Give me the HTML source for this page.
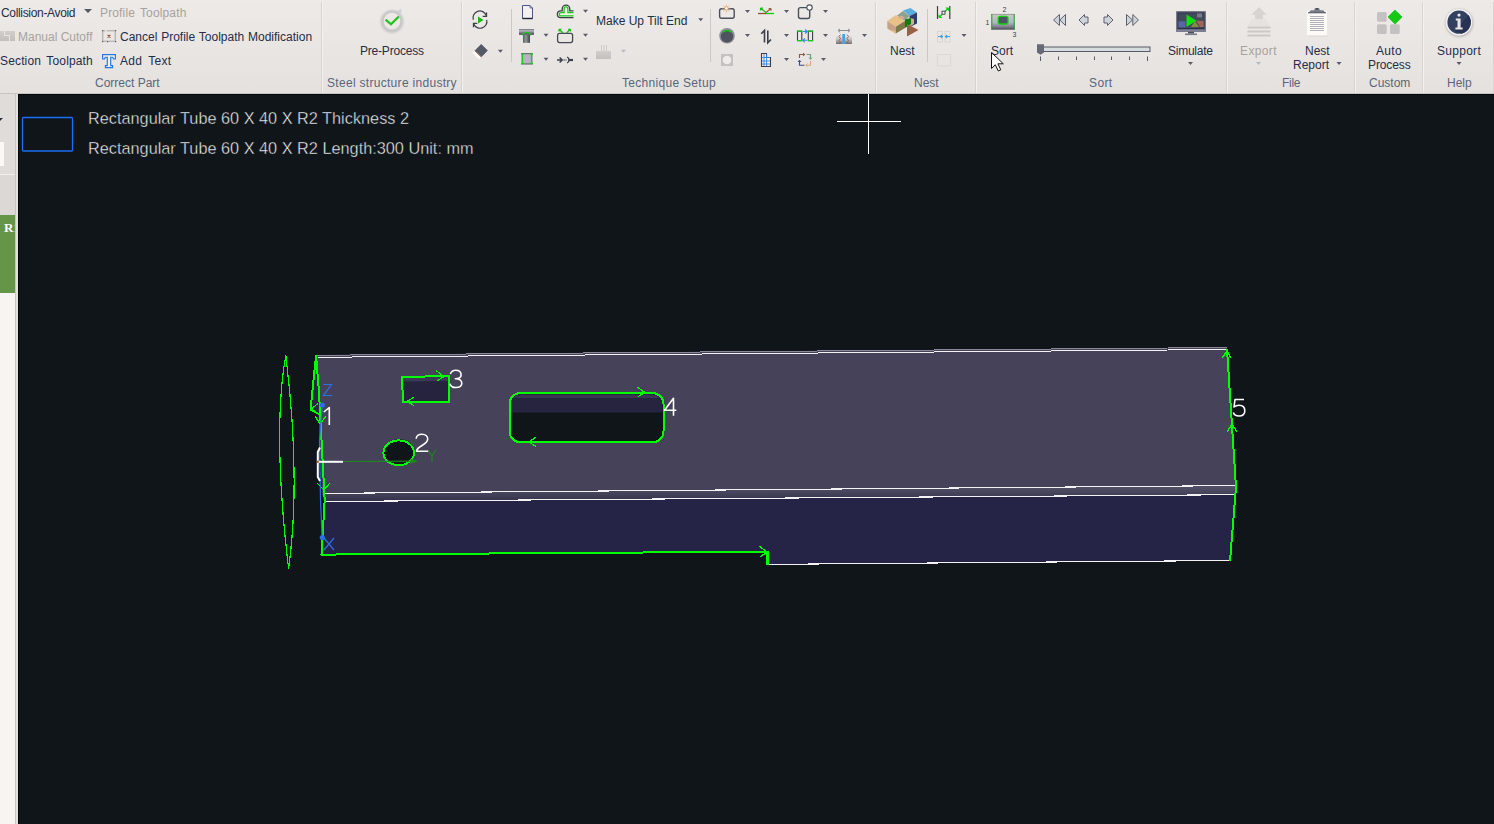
<!DOCTYPE html>
<html><head><meta charset="utf-8">
<style>
*{margin:0;padding:0;box-sizing:border-box}
html,body{width:1494px;height:824px;overflow:hidden;background:#10151a;font-family:"Liberation Sans",sans-serif}
#rib{position:absolute;left:0;top:0;width:1494px;height:94px;background:linear-gradient(#eeeae7,#e5e1de);border-bottom:1px solid #c9c4c2}
.t{position:absolute;white-space:nowrap;font-size:12px;line-height:14px;color:#252d48}
.d{color:#a8a29c}
.g{color:#58667c}
.sep{position:absolute;top:2px;width:1px;height:91px;background:#d9d4d1;box-shadow:1px 0 0 #f4f1ef}
.isep{position:absolute;top:9px;width:1px;height:53px;background:#cdc8c5}
.dd{position:absolute;width:0;height:0;border-left:4px solid transparent;border-right:4px solid transparent;border-top:4px solid #555b66}
.ico{position:absolute}
#left{position:absolute;left:0;top:94px;width:18px;height:730px;background:#f8f4f1;border-right:2px solid #e4e0dd;box-shadow:inset -1px 0 0 #c9c4c1}
#cv{position:absolute;left:18px;top:94px;width:1476px;height:730px;background:#10151a;border-top:1px solid #03070a;border-left:1px solid #03070a}
.ct{position:absolute;white-space:nowrap;font-size:16.3px;line-height:18px;color:#f4f4f4;-webkit-text-stroke:0.4px #10151a}
</style></head><body>
<div id="rib">
<svg id="ribsvg" width="1494" height="94" viewBox="0 0 1494 94" style="position:absolute;left:0;top:0">
<defs>
<linearGradient id="gGray" x1="0" y1="0" x2="0" y2="1"><stop offset="0" stop-color="#d2cecb"/><stop offset="1" stop-color="#c3bfbc"/></linearGradient>
<linearGradient id="gPipe" x1="0" y1="0" x2="0" y2="1"><stop offset="0" stop-color="#6b6d78"/><stop offset="0.3" stop-color="#b7b8c0"/><stop offset="0.7" stop-color="#6e707b"/><stop offset="1" stop-color="#3e404c"/></linearGradient>
<linearGradient id="gStem" x1="0" y1="0" x2="1" y2="0"><stop offset="0" stop-color="#5a5c66"/><stop offset="0.4" stop-color="#8f9a90"/><stop offset="1" stop-color="#3f414d"/></linearGradient>
<linearGradient id="gSort" x1="0" y1="0" x2="0" y2="1"><stop offset="0" stop-color="#8e8c90"/><stop offset="0.1" stop-color="#c9c5c5"/><stop offset="0.55" stop-color="#b1b3c3"/><stop offset="0.8" stop-color="#80828f"/><stop offset="1" stop-color="#4b4c5a"/></linearGradient>
<linearGradient id="gBlock" x1="0" y1="0" x2="0" y2="1"><stop offset="0" stop-color="#f4f2f0"/><stop offset="0.5" stop-color="#c6c6c8"/><stop offset="1" stop-color="#6f717a"/></linearGradient>
<radialGradient id="gShadow" cx="0.5" cy="0.5" r="0.5"><stop offset="0.7" stop-color="#c8c6c6"/><stop offset="1" stop-color="#e9e5e2" stop-opacity="0"/></radialGradient>
</defs>
<!-- dropdown arrows -->
<g fill="#575c68">
<polygon points="85.5,9.5 90.5,9.5 88,12.5"/>
<polygon points="497.9,49.8 502.9,49.8 500.4,52.8"/>
<polygon points="543.5,33.8 548.5,33.8 546,36.8"/>
<polygon points="543.5,57.8 548.5,57.8 546,60.8"/>
<polygon points="583,9.8 588,9.8 585.5,12.8"/>
<polygon points="583,33.8 588,33.8 585.5,36.8"/>
<polygon points="583,57.8 588,57.8 585.5,60.8"/>
<polygon points="698.2,18.2 703.2,18.2 700.7,21.2"/>
<polygon points="745,10 750,10 747.5,13"/>
<polygon points="784,10 789,10 786.5,13"/>
<polygon points="823,10 828,10 825.5,13"/>
<polygon points="745,34 750,34 747.5,37"/>
<polygon points="784,34 789,34 786.5,37"/>
<polygon points="823,34 828,34 825.5,37"/>
<polygon points="862,34 867,34 864.5,37"/>
<polygon points="784,58 789,58 786.5,61"/>
<polygon points="821,58 826,58 823.5,61"/>
<polygon points="961.5,34 966.5,34 964,37"/>
<polygon points="1188,62 1193,62 1190.5,65"/>
<polygon points="1336.5,62 1341.5,62 1339,65"/>
<polygon points="1456.5,62 1461.5,62 1459,65"/>
</g>
<g fill="#b3b8c6">
<polygon points="621,49.8 626,49.8 623.5,52.8"/>
<polygon points="1256,62 1261,62 1258.5,65"/>
</g>
<!-- Manual cutoff disabled icon -->
<g>
<path d="M0,31 H4 V36 H9 V41 H0 Z" fill="url(#gGray)"/>
<path d="M5,31 H15 V41 H10 V35 H5 Z" fill="url(#gGray)"/>
</g>
<!-- cancel icon -->
<rect x="102.7" y="30.7" width="12.6" height="10.6" fill="none" stroke="#bcb8b5" stroke-width="1.5"/>
<rect x="105" y="29.8" width="2" height="1.8" fill="#e6e2df"/>
<g fill="#5a5c66"><rect x="102" y="30" width="1.2" height="1.2"/><rect x="115" y="30" width="1.2" height="1.2"/><rect x="102" y="41" width="1.2" height="1.2"/><rect x="115" y="41" width="1.2" height="1.2"/><rect x="107" y="41" width="1.2" height="1.2"/></g>
<path d="M107.6,34.8 L110.4,37.6 M110.4,34.8 L107.6,37.6" stroke="#8a4526" stroke-width="1.1"/>
<!-- T icon -->
<path d="M102.6,54.6 H115.4 V59 H113.6 L112.7,57.2 H110.7 V65.6 H112.6 V67.6 H105.4 V65.6 H107.3 V57.2 H105.3 L104.4,59 H102.6 Z" fill="#fbefe3" stroke="#1f78e6" stroke-width="1.15"/>
<!-- Pre-Process -->
<filter id="blur1" x="-50%" y="-50%" width="200%" height="200%"><feGaussianBlur stdDeviation="1.1"/></filter>
<circle cx="392" cy="21.5" r="9.6" fill="none" stroke="#c2c0c2" stroke-width="3.2" filter="url(#blur1)"/>
<circle cx="392" cy="21" r="8.2" fill="#ece8e5"/>
<path d="M396.5,11.5 L401.5,8.5 L401,14 Z" fill="#cfd1d8"/>
<path d="M385.6,19.6 L391,24.3 L398.8,16.5" fill="none" stroke="#22c222" stroke-width="2.3"/>
<!-- refresh/play -->
<path d="M486.2,15.5 A6.8,6.8 0 0 0 473.3,19.8 M473.8,24 A6.8,6.8 0 0 0 486.7,19.8" fill="none" stroke="#3d414c" stroke-width="1.2"/>
<path d="M486.5,12.5 V16.3 H482.7 M473.5,27.2 V23.4 H477.3" fill="none" stroke="#3d414c" stroke-width="1.3"/>
<polygon points="478,16.5 483.5,20 478,23.5" fill="#18b818"/>
<!-- eraser -->
<polygon points="481.2,44 487.8,50.4 481.5,57 474.8,50.4" fill="#535966"/>
<polygon points="474.8,50.4 481.5,57 479,59.5 472.5,53" fill="#fbf8f6"/>
<line x1="474.8" y1="50.6" x2="481.3" y2="57" stroke="#8a5a40" stroke-width="1"/>
<!-- separators inner drawn in html -->
<!-- page icon -->
<path d="M522.5,5.5 H530 L532.5,8 V18.5 H522.5 Z" fill="#f3f0ee" stroke="#4a5590" stroke-width="1"/>
<path d="M530,5.5 V8 H532.5" fill="none" stroke="#4a5590" stroke-width="0.8"/>
<line x1="522.5" y1="18.5" x2="532.5" y2="18.5" stroke="#1d2240" stroke-width="1.4"/>
<!-- T pipe -->
<rect x="519" y="29" width="15" height="5.8" fill="url(#gPipe)"/>
<rect x="523" y="34.8" width="7" height="8" fill="url(#gStem)"/>
<path d="M522.5,35.5 A4,3.2 0 0 1 530.5,35.5" fill="none" stroke="#1cc81c" stroke-width="1.2"/>
<!-- square green corners -->
<rect x="521" y="53" width="12" height="11.5" fill="#b4b5c1"/>
<rect x="521" y="53" width="12" height="1.2" fill="#6e707b"/>
<rect x="521" y="63.3" width="12" height="1.2" fill="#6e707b"/>
<path d="M522.5,54 V64 M531.5,54 V64" stroke="#15d015" stroke-width="1.3"/>
<path d="M521,54 H523.5 M521,63.5 H523.5 M530.5,54 H533 M530.5,63.5 H533" stroke="#15d015" stroke-width="1.2"/>
<!-- cloud icon -->
<path d="M573.5,10.8 H569.8 V9.2 A3.3,3.6 0 0 0 562.2,9.2 V10.8 H560.8 A3.45,3.45 0 0 0 560.8,17.7 H573.5" fill="#f7eeee" stroke="#3b3f4a" stroke-width="1.3"/>
<path d="M573.5,12.6 H567.9 V8.9 A1.65,1.8 0 0 0 564.1,8.9 V12.6 H560.9 A1.6,1.6 0 0 0 560.9,15.8 H573.5" fill="none" stroke="#10d010" stroke-width="1.3"/>
<!-- rect arrows -->
<rect x="557.6" y="33.4" width="15" height="9.2" rx="2" fill="none" stroke="#454955" stroke-width="1.3"/>
<path d="M563,33 L559,29.3 M559,29.3 V31.6 M559,29.3 H561.3 M566.5,33 L570.5,29.3 M570.5,29.3 V31.6 M570.5,29.3 H568.2" stroke="#10c010" stroke-width="1.3" fill="none"/>
<!-- arrow dots -->
<path d="M557,60 H562 M559.6,57.4 L562.3,60 L559.6,62.6 M563.6,60 H564.6 M565.6,60 H566.4" stroke="#3b3f4a" stroke-width="1.4" fill="none"/><path d="M567,57 A3.2,3.2 0 0 1 567,63" stroke="#3b3f4a" stroke-width="1.3" fill="none"/><path d="M568.5,60 H573" stroke="#3b3f4a" stroke-width="2.2"/>
<!-- disabled comb -->
<rect x="596" y="51" width="15" height="8" fill="url(#gGray)"/>
<path d="M601.5,45 V51 M604,45 V51 M606.5,45 V51" stroke="#cfcbc8" stroke-width="1"/>
<!-- rect + sun -->
<rect x="719.6" y="8.7" width="14.6" height="9.6" rx="2" fill="none" stroke="#4a4f5c" stroke-width="1.4"/>
<circle cx="726.4" cy="8.4" r="1.8" fill="#fff" stroke="#e49a58" stroke-width="1"/>
<path d="M726.4,4.5 V5.5 M726.4,11.3 V12.3 M722.5,8.4 H723.5 M729.3,8.4 H730.3 M723.6,5.6 L724.3,6.3 M728.5,10.5 L729.2,11.2 M729.2,5.6 L728.5,6.3 M723.6,11.2 L724.3,10.5" stroke="#e49a58" stroke-width="0.9"/>
<!-- line icon -->
<path d="M758,13.5 H766" stroke="#8a5030" stroke-width="1.3"/>
<path d="M766,13.5 H774" stroke="#10c810" stroke-width="1.3"/>
<path d="M766,12.5 L760.5,8 M760.5,8 V10.5 M760.5,8 H763" stroke="#10c010" stroke-width="1.2" fill="none"/>
<path d="M766,12.5 L771,8.5 M771,8.5 V10.8 M771,8.5 H768.7" stroke="#9a5a3a" stroke-width="1.2" fill="none"/>
<!-- square with circle -->
<rect x="798.5" y="7.6" width="11.2" height="10.9" rx="2" fill="none" stroke="#4a4f5c" stroke-width="1.4"/>
<circle cx="809.5" cy="7.6" r="2.7" fill="#ffffff" stroke="#4a4f5c" stroke-width="1.1"/>
<!-- dark circle -->
<circle cx="727" cy="35.8" r="7.8" fill="#8d8f97"/>
<circle cx="727" cy="36.3" r="6.2" fill="#4e535f"/>
<path d="M722.5,32.3 A6,5 0 0 1 731.5,32.3" fill="none" stroke="#15c815" stroke-width="1.2"/>
<!-- up down arrows -->
<path d="M764.5,42.5 V30.5 L761.2,33.8" stroke="#3b3f4a" stroke-width="1.6" fill="none"/>
<path d="M767.8,30.5 V42.8 L771,39.5" stroke="#3b3f4a" stroke-width="1.6" fill="none"/>
<!-- green boxes blue arrows -->
<rect x="797.5" y="31.2" width="4.3" height="9.4" fill="none" stroke="#3b3f4a" stroke-width="1.1"/>
<rect x="808.3" y="31.2" width="4.3" height="9.4" fill="none" stroke="#3b3f4a" stroke-width="1.1"/>
<path d="M797,31.2 H802.3 M797,40.6 H802.3 M807.8,31.2 H813.1 M807.8,40.6 H813.1" stroke="#10d010" stroke-width="1.3"/>
<path d="M803,31.5 H807 M805.2,29.5 L807.2,31.5 L805.2,33.5 M807,40.3 H803 M804.8,38.3 L802.8,40.3 L804.8,42.3" stroke="#2a86f0" stroke-width="1.1" fill="none"/>
<!-- pipe thing -->
<path d="M838,30.5 H850 M840,28.8 L838,30.5 L840,32.2 M848,28.8 L850,30.5 L848,32.2" stroke="#8a8c94" stroke-width="1" fill="none"/>
<rect x="836" y="34" width="16" height="10" fill="url(#gBlock)"/>
<rect x="842.3" y="34" width="2.8" height="10" fill="#4aa3e0"/>
<path d="M840.5,34.5 L839,36.5 L840.5,38.5 L839,40.5 L840.5,42.5 L839,44 M847,34.5 L848.5,36.5 L847,38.5 L848.5,40.5 L847,42.5 L848.5,44" stroke="#9a4a30" stroke-width="0.8" fill="none"/>
<!-- gray square circle -->
<rect x="721" y="54" width="12" height="12" fill="#c3c1bf"/>
<circle cx="727" cy="60" r="4.3" fill="#efebe8"/>
<!-- building grid -->
<path d="M761.5,53.5 H766.5 V57.5 H770.5 V66.5 H761.5 Z" fill="#fbefe6" stroke="#3b3f4a" stroke-width="1.1"/>
<path d="M764,54 V66 M766.6,54 V66 M762,57.5 H770 M762,61 H770 M762,64 H770" stroke="#2a86f0" stroke-width="0.9"/>
<!-- loop arrows -->
<path d="M799.5,58 V54.5 H804.5" stroke="#8a5a40" stroke-width="1.1" fill="none"/>
<path d="M803,53 L804.8,54.5 L803,56" stroke="#8a5a40" stroke-width="1" fill="none"/>
<path d="M806.5,54.5 H810.5 V59" stroke="#7a9a88" stroke-width="1.1" fill="none"/>
<path d="M809,57.5 L810.5,59.3 L812,57.5" stroke="#7a9a88" stroke-width="1" fill="none"/>
<path d="M810.5,61 V65.2 H806" stroke="#e0a870" stroke-width="1.1" fill="none"/>
<path d="M807.5,63.6 L805.8,65.2 L807.5,66.8" stroke="#e0a870" stroke-width="1" fill="none"/>
<path d="M804.5,65.2 H799.5 V60.5" stroke="#3a4a90" stroke-width="1.1" fill="none"/>
<path d="M798,62 L799.5,60.2 L801,62" stroke="#3a4a90" stroke-width="1" fill="none"/>
<!-- Nest icon -->
<polygon points="903,10.5 910.5,8 917,12.5 909.5,16" fill="#5aaee0"/>
<polygon points="909.5,16 917,12.5 917,23.5 910,27" fill="#2d3d68"/>
<polygon points="897,15.5 903,11 909.5,16 905,21" fill="#8fa090"/>
<polygon points="910,18 914,19 914,24 908,27.5" fill="#d3ab90"/>
<polygon points="887.3,21 895.8,14.9 905,21 895.8,26.7" fill="#e8c088"/>
<polygon points="887.3,21 895.8,26.7 895.8,33.5 887.3,28.5" fill="#c9a088"/>
<polygon points="891,30 895.8,31 895.8,33.5 889,30" fill="#e8c088"/>
<polygon points="895.8,26.7 905,21 905,28 895.8,33.5" fill="#7d7a48"/>
<polygon points="905,19.5 911,18 911,24 905,28" fill="#127a12"/>
<polygon points="898,17 902,15.5 905,18 901,19.5" fill="#d4ab90"/>
<polygon points="907,24 918.5,30 907,36.5" fill="#9b6048"/>
<!-- nest small icons -->
<path d="M937.5,6 V19 M949.8,6 V19" stroke="#3b3f4a" stroke-width="1.2"/>
<path d="M939,17.5 L948.5,8 M939,17.5 V14.8 M939,17.5 H941.7 M948.5,8 V10.7 M948.5,8 H945.8" stroke="#10c810" stroke-width="1.2" fill="none"/>
<rect x="942" y="11.2" width="3" height="3" fill="#f3efec" stroke="#3b3f4a" stroke-width="0.9"/>
<rect x="937.5" y="31.5" width="5" height="10.5" fill="none" stroke="#d8d4d2" stroke-width="1"/>
<rect x="945" y="31.5" width="5" height="10.5" fill="none" stroke="#d8d4d2" stroke-width="1"/>
<path d="M938,36.5 H942.5 M940.8,35 L942.5,36.5 L940.8,38 M950,36.5 H945.5 M947.2,35 L945.5,36.5 L947.2,38" stroke="#42a0e8" stroke-width="1.1" fill="none"/>
<rect x="937.5" y="54.5" width="13" height="11.5" fill="none" stroke="#dcd8d6" stroke-width="1"/>
<!-- sort icon -->
<rect x="991.3" y="13.9" width="23.4" height="15.8" fill="url(#gSort)"/>
<path d="M991.8,14 V29.6 M1014.2,14 V29.6" stroke="#20a020" stroke-width="1"/>
<rect x="998.2" y="16.4" width="9.8" height="7.6" rx="2" fill="#505466" stroke="#10d010" stroke-width="1.3"/>
<text x="985.5" y="24.5" font-family="Liberation Sans" font-size="7" fill="#3a3e48">1</text>
<text x="1002.5" y="12" font-family="Liberation Sans" font-size="7" fill="#3a3e48">2</text>
<text x="1012.5" y="36.5" font-family="Liberation Sans" font-size="7" fill="#3a3e48">3</text>
<!-- nav arrows -->
<g fill="#cfd4da" stroke="#5d6170" stroke-width="1">
<polygon points="1053.5,20 1059.5,14.5 1059.5,25.5"/>
<polygon points="1059.8,20 1065.5,14.5 1065.5,25.5"/>
<polygon points="1079,20 1084.5,14.5 1084.5,17 1088,17 1088,23 1084.5,23 1084.5,25.5"/>
<polygon points="1113,20 1107.5,14.5 1107.5,17 1104,17 1104,23 1107.5,23 1107.5,25.5"/>
<polygon points="1126.5,14.5 1132.5,20 1126.5,25.5"/>
<polygon points="1132.8,14.5 1138.5,20 1132.8,25.5"/>
</g>
<!-- slider -->
<rect x="1043.5" y="47" width="106.5" height="4.5" fill="#d6dce0" stroke="#565b67" stroke-width="1"/>
<path d="M1037,44.3 H1044 V52.5 L1040.5,54.8 L1037,52.5 Z" fill="#666a76"/>
<g stroke="#555a66" stroke-width="1">
<path d="M1040.5,56.5 V61 M1058.5,56.5 V60 M1076.5,56.5 V60 M1094.5,56.5 V60 M1111.5,56.5 V60 M1129.5,56.5 V60 M1147.5,56.5 V61"/>
</g>
<!-- monitor -->
<rect x="1176.2" y="11.2" width="29.6" height="20.6" fill="#5d5f73"/>
<rect x="1177.6" y="12.6" width="26.8" height="16.4" fill="#2b3048"/>
<rect x="1178.4" y="13.4" width="25.4" height="14.6" fill="#414b5b"/>
<rect x="1178.4" y="21.4" width="7" height="6" fill="#5865a8"/>
<polygon points="1196,20.5 1203.5,21 1203.8,27 1200,27" fill="#a06458"/>
<polygon points="1191,27 1195,21 1199,27" fill="#8a8a40"/>
<rect x="1197" y="13.4" width="5" height="4" fill="#777a88"/>
<polygon points="1186.5,14.5 1196.5,20.8 1186.5,27" fill="#10e010"/>
<rect x="1176.2" y="29.5" width="29.6" height="2.3" fill="#7d7f92"/>
<rect x="1188" y="31.8" width="6" height="1.8" fill="#4d4f5e"/>
<rect x="1185" y="33.5" width="12" height="1.6" fill="#7a7c8c"/>
<!-- export disabled -->
<polygon points="1251.4,14.8 1259,7.1 1266.7,14.8 1263,14.8 1263,23 1255,23 1255,14.8" fill="#d8d4d1"/>
<polygon points="1252,19 1266,19 1270,26 1248,26" fill="#e6e2df"/>
<rect x="1247.5" y="26.5" width="23" height="2" fill="#ccc8c4"/>
<rect x="1247.5" y="30.5" width="23" height="2" fill="#ccc8c4"/>
<rect x="1247.5" y="34.5" width="23" height="2" fill="#ccc8c4"/>
<!-- clipboard -->
<rect x="1307" y="11" width="20" height="25" fill="#fdfaf8"/>
<rect x="1307.5" y="35.5" width="20" height="1" fill="#d9d5d2"/>
<polygon points="1308,13 1311,10.3 1314,10.3 1315,8 1319,8 1320,10.3 1323,10.3 1326,13" fill="#7a7d88"/>
<rect x="1308" y="12.3" width="18" height="1" fill="#5a5d6a"/>
<circle cx="1317" cy="8.8" r="0.9" fill="#2e3a52"/>
<g stroke="#9c9ea6" stroke-width="0.8"><path d="M1310,16.5 H1324 M1310,18.5 H1324 M1310,20.5 H1324 M1310,22.5 H1324 M1310,24.5 H1324 M1310,26.5 H1324 M1310,28.5 H1324 M1310,30.5 H1324"/></g>
<!-- auto process -->
<g fill="#c3c1c1">
<rect x="1377" y="12" width="9.7" height="9.7" rx="1.5"/>
<rect x="1377" y="24.2" width="9.7" height="9.7" rx="1.5"/>
<rect x="1390" y="24.2" width="9.7" height="9.7" rx="1.5"/>
</g>
<polygon points="1395,10.5 1401.5,17 1395,23.5 1388.5,17" fill="#14c814" stroke="#14c814" stroke-width="1.2" stroke-linejoin="round"/>
<!-- support -->
<circle cx="1459.3" cy="23" r="14" fill="#bdbaba" filter="url(#blur1)"/>
<circle cx="1459" cy="22.2" r="13.2" fill="#f4f2f2"/>
<circle cx="1459" cy="22.2" r="11.6" fill="#33405f"/>
<path d="M1468.5,15 A11.6,11.6 0 0 1 1462,33.4 L1455,31 Z" fill="#283252"/>
<circle cx="1459" cy="15.1" r="1.6" fill="#e8e5e2"/>
<path d="M1455.8,18.6 H1460.6 V27.6 H1462.6 V29.4 H1455.4 V27.6 H1457.5 V20.4 H1455.8 Z" fill="#e8e5e2"/>
<!-- cursor -->
<path d="M991.5,52.5 V68.5 L995.3,64.8 L998.3,71 L1000.8,69.8 L997.9,63.8 L1003.3,63.8 Z" fill="#ffffff" stroke="#111111" stroke-width="1" stroke-linejoin="miter"/>
</svg>

  <!-- Correct Part -->
  <div class="t" style="left:1px;top:6px;letter-spacing:-0.33px">Collision-Avoid</div>
  <div class="dd" style="left:84px;top:9px"></div>
  <div class="t d" style="left:100px;top:6px;letter-spacing:0.15px;word-spacing:1.6px">Profile Toolpath</div>
  <div class="t d" style="left:18px;top:30px">Manual Cutoff</div>
  <div class="t" style="left:120px;top:30px;word-spacing:0.5px">Cancel Profile Toolpath Modification</div>
  <div class="t" style="left:0px;top:54px;letter-spacing:0.15px;word-spacing:2px">Section Toolpath</div>
  <div class="t" style="left:120px;top:54px;letter-spacing:0.3px;word-spacing:2.5px">Add Text</div>
  <div class="t g" style="left:95px;top:76px">Correct Part</div>
  <div class="sep" style="left:321px"></div>
  <!-- Pre-process -->
  <div class="t" style="left:360px;top:44px;letter-spacing:-0.2px">Pre-Process</div>
  <div class="t g" style="left:327px;top:76px;letter-spacing:0.3px">Steel structure industry</div>
  <div class="sep" style="left:461px"></div>
  <!-- Technique -->
  <div class="isep" style="left:511px"></div>
  <div class="t" style="left:596px;top:14px">Make Up Tilt End</div>
  <div class="isep" style="left:710px"></div>
  <div class="t g" style="left:622px;top:76px;letter-spacing:0.3px">Technique Setup</div>
  <div class="sep" style="left:875px"></div>
  <!-- Nest -->
  <div class="t" style="left:890px;top:44px">Nest</div>
  <div class="isep" style="left:927px"></div>
  <div class="t g" style="left:914px;top:76px">Nest</div>
  <div class="sep" style="left:975px"></div>
  <!-- Sort -->
  <div class="t" style="left:991px;top:44px">Sort</div>
  <div class="t" style="left:1168px;top:44px;letter-spacing:-0.25px">Simulate</div>
  <div class="t g" style="left:1089px;top:76px;letter-spacing:0.4px">Sort</div>
  <div class="sep" style="left:1226px"></div>
  <!-- File -->
  <div class="t d" style="left:1240px;top:44px;letter-spacing:0.38px">Export</div>
  <div class="t" style="left:1305px;top:44px">Nest</div>
  <div class="t" style="left:1293px;top:58px">Report</div>
  <div class="t g" style="left:1282px;top:76px;letter-spacing:-0.3px">File</div>
  <div class="sep" style="left:1354px"></div>
  <div class="t" style="left:1376px;top:44px;letter-spacing:0.3px">Auto</div>
  <div class="t" style="left:1368px;top:58px;letter-spacing:-0.1px">Process</div>
  <div class="t g" style="left:1369px;top:76px">Custom</div>
  <div class="sep" style="left:1422px"></div>
  <div class="t" style="left:1437px;top:44px;letter-spacing:0.28px">Support</div>
  <div class="t g" style="left:1447px;top:76px">Help</div>
  <div class="sep" style="left:1493px"></div>
</div>
<div id="left">
  <div style="position:absolute;left:0;top:0;width:15px;height:81px;background:#e0dcd9"></div>
  <div style="position:absolute;left:-3px;top:23.5px;width:0;height:0;border-left:3.5px solid transparent;border-right:3.5px solid transparent;border-top:3.5px solid #2a2f3a"></div>
  <div style="position:absolute;left:0;top:48px;width:4px;height:24px;background:#fcf8f5"></div>
  <div style="position:absolute;left:0;top:80px;width:15px;height:1px;background:#f3efec"></div>
  <div style="position:absolute;left:0;top:81px;width:15px;height:40px;background:#dcd8d5"></div>
  <div style="position:absolute;left:0;top:121px;width:15px;height:78px;background:#659548;overflow:hidden">
    <div style="position:absolute;left:4px;top:6px;font-family:'Liberation Serif',serif;font-weight:bold;font-size:13px;line-height:14px;color:#fff">R1</div>
  </div>
</div>
<div id="cv"></div>
<svg id="scene" width="1494" height="824" viewBox="0 0 1494 824" style="position:absolute;left:0;top:0">
<defs>
<linearGradient id="bev" x1="0" y1="0" x2="0" y2="1"><stop offset="0" stop-color="#55536a"/><stop offset="1" stop-color="#34324a"/></linearGradient>
</defs>
<rect x="22.5" y="117.5" width="50" height="33.5" fill="none" stroke="#1b6ff2" stroke-width="1.3" rx="1"/>
<g stroke="#ffffff" stroke-width="1.2" shape-rendering="crispEdges">
<line x1="868.5" y1="94" x2="868.5" y2="154"/>
<line x1="837" y1="121.5" x2="901" y2="121.5"/>
</g>
<!-- top face -->
<polygon points="316,355 1227,347.5 1235.5,486 322,493.5" fill="#45425a"/>
<polygon points="322,493.5 1235.5,485.6 1235.5,494.7 324,501.5" fill="url(#bev)"/>
<polygon points="324,501.5 1235.5,494.7 1230,560.5 767,564.4 767,551.7 320.5,554.6" fill="#262446"/>
<g stroke="#f4f2f2" stroke-width="1.1" fill="none" shape-rendering="crispEdges">
<line x1="318" y1="357.3" x2="1227" y2="349.5" stroke-width="1"/>
<line x1="324" y1="493.4" x2="1235" y2="485.6"/>
<line x1="325" y1="501.5" x2="1235" y2="494.7"/>
<line x1="767" y1="564.4" x2="1230" y2="560.5"/>
</g>
<line x1="316" y1="355.3" x2="1227" y2="347.5" stroke="#8a8896" stroke-width="1" shape-rendering="crispEdges"/>
<!-- holes -->
<polygon points="402,377 448.5,376.2 449.5,401.5 403,402.3" fill="#26233f"/>
<polygon points="403,377.5 448,376.8 448,381 403,381.5" fill="#3c3955"/>
<rect x="509.5" y="393" width="154" height="49.3" rx="10" ry="10" fill="#10151a"/>
<path d="M519.5,394 H653.5 A9,9 0 0 1 662.5,403 V412.4 H510.5 V403 A9,9 0 0 1 519.5,394 Z" fill="#27243f"/>
<path d="M519.5,395 H653.5 A9,9 0 0 1 660,398 H513 A9,9 0 0 1 519.5,395 Z" fill="#3a3752"/>
<ellipse cx="398.7" cy="452.8" rx="15.3" ry="12.4" fill="#10151a"/>
<path d="M386,447 A14,11 0 0 1 412,447" stroke="#2c2a40" stroke-width="2" fill="none"/>
<!-- wedge -->
<polygon points="316,356 311,409 318,416 320,390" fill="#2a2745"/>
<!-- green -->
<g stroke="#00ff00" stroke-width="2" fill="none" stroke-linejoin="round" shape-rendering="crispEdges">
<path d="M1227,349 L1236,487 L1230,561"/>
<path d="M316,355 L319,392 L324.7,500 L321.5,554.6 L767,551.7 L767,564"/>
<path d="M316,356 L310.5,409.5 L319,414"/>
<polygon points="402,376.8 448.8,376.2 449.5,401.8 403,402.5"/>
<rect x="509.5" y="393" width="154" height="49.3" rx="11" ry="11"/>
<ellipse cx="398.7" cy="452.8" rx="15.3" ry="12.4"/>
</g>
<g stroke="#00ff00" stroke-width="1.2" fill="none" shape-rendering="crispEdges">
<path d="M285.8,355.5 C276,410 278,480 288.6,568.6 C298,500 295,430 285.8,355.5 Z"/>
<path d="M310.5,409.5 L318,403.5"/>
<path d="M315,416 L320,424 L326,416"/>
<path d="M317,483 L324,490 L330,483"/>
<path d="M436,370.5 L444,376.5 L437,381"/>
<path d="M414,397 L407,401.5 L414,405.5"/>
<path d="M637,387 L645,392.5 L638,396.5"/>
<path d="M536,437 L529,442 L536,446.5"/>
<path d="M1222,358 L1227,351 L1231,358"/>
<path d="M1227,432 L1232,424 L1237,432"/>
<path d="M759,546 L767,552 L760,557"/><path d="M767.5,551 V564.5" stroke-width="2.5"/>
</g>
<!-- axes -->
<g fill="none">
<polyline points="322.3,405 319.5,440 320.5,500 322,537" stroke="#2f6fe6" stroke-width="1.2"/>
<circle cx="322.3" cy="405" r="2.6" fill="#2f6fe6"/>
<circle cx="322.3" cy="537.5" r="2.6" fill="#2f6fe6"/>
<path d="M323.5,384.5 L331.5,384.5 L323.5,395.5 L332,395.5" stroke="#2f6fe6" stroke-width="1.2"/>
<path d="M324,538 L334,550 M334,538 L324,550" stroke="#2f6fe6" stroke-width="1.2"/>
<path d="M428,450 L432,456 L436,450 M432,456 L432,462" stroke="#1c8a1c" stroke-width="1.2"/>
<line x1="343" y1="461.5" x2="417" y2="461.2" stroke="#1c8a1c" stroke-width="1.2"/><path d="M410.5,458.6 L417.5,461.2 L410.5,463.8 Z" fill="#1c8a1c"/>
<path d="M320,447.5 L317.8,452 L317.8,477 L320,481" stroke="#ffffff" stroke-width="2"/>
<line x1="317.5" y1="461.8" x2="343" y2="461.8" stroke="#ffffff" stroke-width="2"/>
<circle cx="317.8" cy="461.8" r="1.2" fill="#a0603a"/>
</g>
<!-- digits -->
<g stroke="#ffffff" stroke-width="1.6" fill="none" stroke-linejoin="round">
<path transform="translate(323.3,407.5)" d="M0.5,4.5 L6,0 L6,17.5"/>
<path transform="translate(415.9,434.2)" d="M0.3,4.5 C0.3,1.5 2.7,0 6,0 C9.5,0 11.8,2 11.8,4.8 C11.8,7.5 10,9 6.5,11 C3,13 0.8,15 0.5,17 L12.3,17"/>
<path transform="translate(449.8,370.2)" d="M0.5,3.8 C1.5,1.2 3.5,0 6,0 C9,0 11.3,1.8 11.3,4.5 C11.3,7 9.3,8.5 5.5,8.5 C9.5,8.5 12,10.5 12,13 C12,15.8 9.5,17.3 6,17.3 C3,17.3 0.8,16 0.2,13.5"/>
<path transform="translate(664,397.8)" d="M9.5,18 L9.5,0.5 L0.5,12.5 L12.3,12.5"/>
<path transform="translate(1233,399)" d="M11,0.5 L2,0.5 L1,8 C2.5,6.8 4,6.3 6,6.3 C9.5,6.3 11.8,8.5 11.8,11.8 C11.8,15 9.5,17 6,17 C3,17 1,15.8 0.3,13.5"/>
</g>
</svg>

<div class="ct" style="left:88px;top:109px">Rectangular Tube 60 X 40 X R2 Thickness 2</div>
<div class="ct" style="left:88px;top:139px">Rectangular Tube 60 X 40 X R2 Length:300 Unit: mm</div>
</body></html>
